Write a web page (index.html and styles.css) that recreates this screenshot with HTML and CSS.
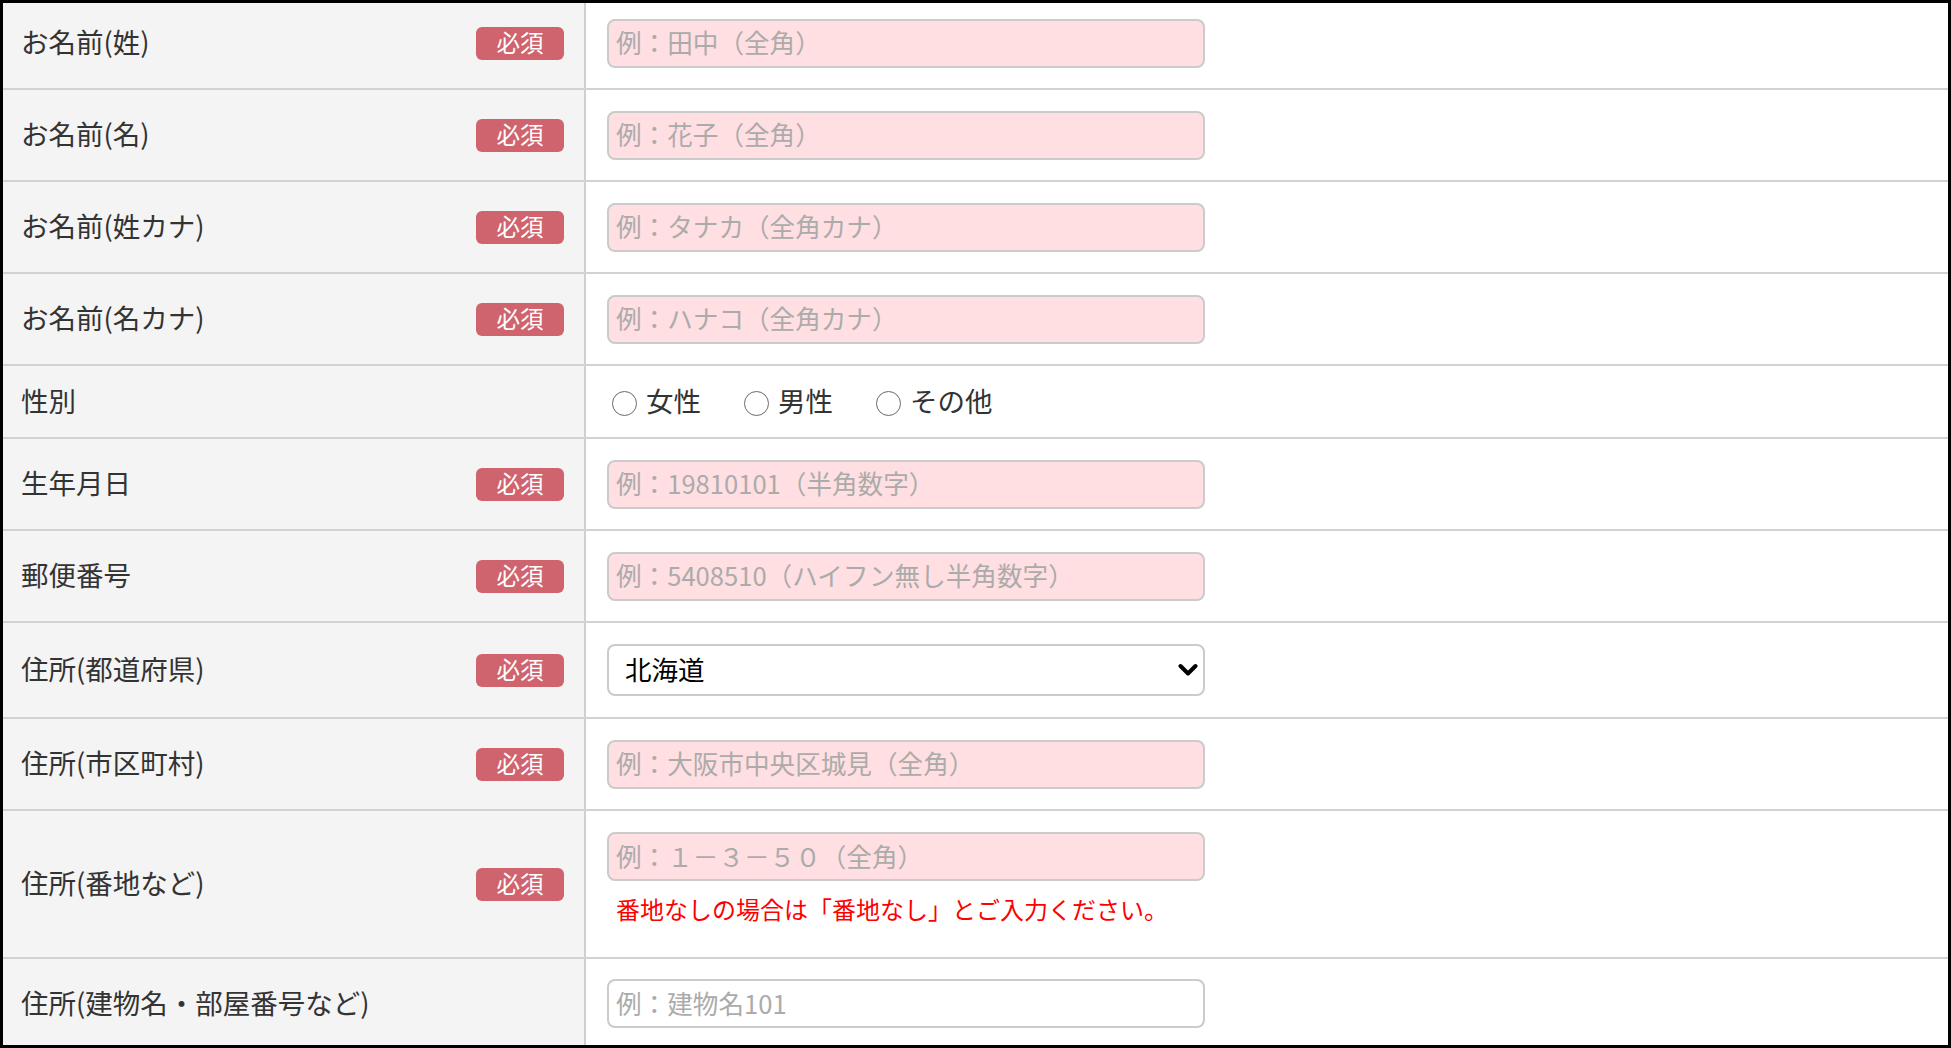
FILE: index.html
```html
<!DOCTYPE html>
<html lang="ja">
<head>
<meta charset="utf-8">
<title>フォーム</title>
<link rel="stylesheet" href="styles.css">
</head>
<body>
<div class="frame">
  <div class="rows">
    <div class="row">
      <div class="th"><span class="label">お名前(姓)</span><span class="badge">必須</span></div>
      <div class="td"><input class="field req" type="text" placeholder="例：田中（全角）"></div>
    </div>
    <div class="row">
      <div class="th"><span class="label">お名前(名)</span><span class="badge">必須</span></div>
      <div class="td"><input class="field req" type="text" placeholder="例：花子（全角）"></div>
    </div>
    <div class="row">
      <div class="th"><span class="label">お名前(姓カナ)</span><span class="badge">必須</span></div>
      <div class="td"><input class="field req" type="text" placeholder="例：タナカ（全角カナ）"></div>
    </div>
    <div class="row">
      <div class="th"><span class="label">お名前(名カナ)</span><span class="badge">必須</span></div>
      <div class="td"><input class="field req" type="text" placeholder="例：ハナコ（全角カナ）"></div>
    </div>
    <div class="row row-radio">
      <div class="th"><span class="label">性別</span></div>
      <div class="td">
        <div class="radios">
          <label class="radio"><input type="radio" name="sex"><span>女性</span></label>
          <label class="radio"><input type="radio" name="sex"><span>男性</span></label>
          <label class="radio"><input type="radio" name="sex"><span>その他</span></label>
        </div>
      </div>
    </div>
    <div class="row">
      <div class="th"><span class="label">生年月日</span><span class="badge">必須</span></div>
      <div class="td"><input class="field req" type="text" placeholder="例：19810101（半角数字）"></div>
    </div>
    <div class="row">
      <div class="th"><span class="label">郵便番号</span><span class="badge">必須</span></div>
      <div class="td"><input class="field req" type="text" placeholder="例：5408510（ハイフン無し半角数字）"></div>
    </div>
    <div class="row row-select">
      <div class="th"><span class="label">住所(都道府県)</span><span class="badge">必須</span></div>
      <div class="td">
        <div class="select-wrap">
          <select class="select">
            <option>北海道</option>
            <option>青森県</option>
            <option>岩手県</option>
          </select>
          <svg class="chevron" width="20" height="13" viewBox="0 0 20 13" aria-hidden="true"><polyline points="2.5,2.5 10,10 17.5,2.5" fill="none" stroke="#000" stroke-width="4" stroke-linecap="round" stroke-linejoin="round"/></svg>
        </div>
      </div>
    </div>
    <div class="row">
      <div class="th"><span class="label">住所(市区町村)</span><span class="badge">必須</span></div>
      <div class="td"><input class="field req" type="text" placeholder="例：大阪市中央区城見（全角）"></div>
    </div>
    <div class="row row-note">
      <div class="th"><span class="label">住所(番地など)</span><span class="badge">必須</span></div>
      <div class="td td-stack">
        <input class="field req" type="text" placeholder="例：１－３－５０（全角）">
        <p class="note">番地なしの場合は「番地なし」とご入力ください。</p>
      </div>
    </div>
    <div class="row row-last">
      <div class="th"><span class="label">住所(建物名・部屋番号など)</span></div>
      <div class="td"><input class="field" type="text" placeholder="例：建物名101"></div>
    </div>
  </div>
</div>
</body>
</html>
```
FILE: styles.css
```css
* {
  box-sizing: border-box;
}

html, body {
  margin: 0;
  padding: 0;
  background: #000;
}

body {
  font-family: "Noto Sans CJK JP", "Noto Sans", sans-serif;
  color: #333;
}

.frame {
  width: 1951px;
  height: 1048px;
  border: 3px solid #000;
  overflow: hidden;
  background: #fff;
}

.rows {
  margin-top: -5px;
}

.row {
  display: grid;
  grid-template-columns: 583px 1fr;
  height: 92px;
  border-bottom: 2px solid #d2d2d2;
}

.row-radio {
  height: 73px;
}

.row-select {
  height: 96px;
}

.row-note {
  height: 148px;
}

.row-last {
  height: 100px;
  border-bottom: none;
}

.th {
  background: #f4f4f4;
  border-right: 2px solid #cfcfcf;
  display: flex;
  align-items: center;
  justify-content: space-between;
  padding: 0 20px 0 18px;
}

.label {
  font-size: 27.5px;
  line-height: 1.4;
  color: #333;
  margin-bottom: 3px;
}

.badge {
  width: 88px;
  height: 33px;
  border-radius: 6px;
  background: #d0646e;
  color: #fff;
  font-size: 23.5px;
  line-height: 31px;
  text-align: center;
}

.td {
  display: flex;
  align-items: center;
  padding-left: 21px;
}

.row-last .th,
.row-last .td {
  padding-bottom: 11px;
}

.td-stack {
  flex-direction: column;
  align-items: flex-start;
  justify-content: flex-start;
  padding-top: 21px;
}

.field {
  width: 598px;
  height: 49px;
  border: 2px solid #cbcbcb;
  border-radius: 8px;
  background: #fff;
  padding: 0 7px 3px;
  font-family: inherit;
  font-size: 25.6px;
  color: #333;
  outline: none;
}

.field.req {
  background: #ffdfe1;
}

.field::placeholder {
  color: #ababab;
  opacity: 1;
}

.note {
  margin: 10px 0 0 9px;
  font-size: 24px;
  line-height: 36px;
  color: #f00;
}

.radios {
  display: flex;
  align-items: center;
  gap: 43px;
  padding-left: 5px;
  margin-bottom: 2px;
}

.radio {
  display: flex;
  align-items: center;
  gap: 9px;
  font-size: 27.5px;
  line-height: 1.4;
  color: #333;
}

.radio input {
  appearance: none;
  -webkit-appearance: none;
  width: 25px;
  height: 25px;
  margin: 5px 0 0 0;
  border: 1.5px solid #6a6a6a;
  border-radius: 50%;
  background: #fff;
}

.select-wrap {
  position: relative;
  width: 598px;
}

.select {
  appearance: none;
  -webkit-appearance: none;
  width: 598px;
  height: 52px;
  border: 2px solid #cbcbcb;
  border-radius: 8px;
  background: #fff;
  padding: 0 40px 3px 16px;
  font-family: inherit;
  font-size: 26.5px;
  color: #000;
  outline: none;
}

.chevron {
  position: absolute;
  right: 7px;
  top: 50%;
  transform: translateY(-50%);
  pointer-events: none;
}
```
